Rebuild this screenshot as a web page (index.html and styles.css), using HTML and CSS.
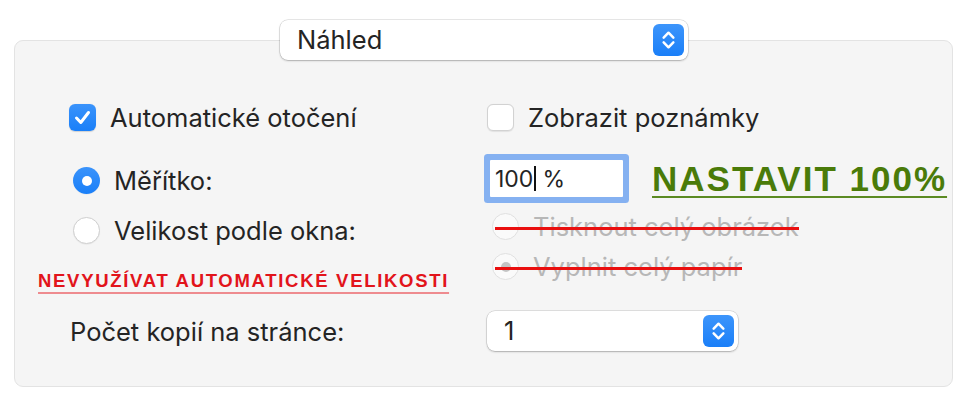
FILE: index.html
```html
<!DOCTYPE html>
<html lang="cs">
<head>
<meta charset="utf-8">
<title>Náhled</title>
<link rel="stylesheet" href="styles.css">
</head>
<body>
<div class="page">
  <div class="popup popup-top">
    <span class="popup-text">Náhled</span>
    <span class="stepper">
      <svg viewBox="0 0 32 32" width="31" height="32"><path d="M11 13.5 L16 8.5 L21 13.5 M11 18.5 L16 23.5 L21 18.5" fill="none" stroke="#fff" stroke-width="2.6" stroke-linecap="round" stroke-linejoin="round"/></svg>
    </span>
  </div>
  <div class="panel">
    <div class="cols">
      <div class="col col-left">
        <div class="check-row first">
          <span class="checkbox checked">
            <svg viewBox="0 0 27 27" width="27" height="27"><path d="M7.5 14 L11.8 18.5 L19.5 8.5" fill="none" stroke="#fff" stroke-width="3" stroke-linecap="round" stroke-linejoin="round"/></svg>
          </span>
          <span>Automatické otočení</span>
        </div>
        <div class="radio-row scale-row"><span class="radio on"></span><span>Měřítko:</span></div>
        <div class="radio-row fit-row"><span class="radio"></span><span>Velikost podle okna:</span></div>
        <div class="note note-red">NEVYUŽÍVAT AUTOMATICKÉ VELIKOSTI</div>
      </div>
      <div class="col col-right">
        <div class="check-row first">
          <span class="checkbox"></span>
          <span>Zobrazit poznámky</span>
        </div>
        <div class="field-row">
          <div class="field"><span>100</span><span class="caret"></span><span class="unit">%</span></div>
          <div class="note note-green">NASTAVIT 100%</div>
        </div>
        <div class="radio-row disabled struck whole-row"><span class="radio"></span><span>Tisknout celý obrázek</span></div>
        <div class="radio-row disabled struck fill-row"><span class="radio dot"></span><span>Vyplnit celý papír</span></div>
      </div>
    </div>
    <div class="copies-row">
      <span class="copies-label">Počet kopií na stránce:</span>
      <div class="popup popup-copies">
        <span class="popup-text">1</span>
        <span class="stepper">
          <svg viewBox="0 0 32 32" width="31" height="32"><path d="M11 13.5 L16 8.5 L21 13.5 M11 18.5 L16 23.5 L21 18.5" fill="none" stroke="#fff" stroke-width="2.6" stroke-linecap="round" stroke-linejoin="round"/></svg>
        </span>
      </div>
    </div>
  </div>
</div>
</body>
</html>
```
FILE: styles.css
```css
html, body {
  margin: 0;
  padding: 0;
  background: #ffffff;
}
body {
  font-family: "Inter", "Liberation Sans", sans-serif;
  color: #242424;
  font-size: 25.5px;
}
.page {
  width: 970px;
  height: 410px;
  padding-top: 20px;
  box-sizing: border-box;
  display: flex;
  flex-direction: column;
}
.popup {
  background: #ffffff;
  border-radius: 8px;
  box-shadow: 0 0 0 0.5px rgba(0,0,0,0.18), 0 1px 2px rgba(0,0,0,0.22);
  height: 40px;
  box-sizing: border-box;
  display: flex;
  align-items: center;
  justify-content: space-between;
  padding: 0 4px 0 17px;
  position: relative;
  z-index: 2;
}
.popup-top {
  width: 408px;
  margin-left: 280px;
}
.popup-text {
  line-height: 1;
}
.stepper {
  width: 31px;
  height: 32px;
  border-radius: 6px;
  background: linear-gradient(#3d95fb, #1a7ff8);
  display: flex;
}
.panel {
  margin: -20px 17px 0 14px;
  height: 347px;
  box-sizing: border-box;
  border: 1px solid #e3e3e3;
  border-radius: 9px;
  background: #f5f5f5;
}
.cols {
  display: grid;
  grid-template-columns: 472px 1fr;
  align-items: start;
}
.col {
  display: flex;
  flex-direction: column;
  align-items: flex-start;
}
.check-row, .radio-row {
  display: flex;
  align-items: center;
  height: 27px;
  gap: 14px;
  white-space: nowrap;
}
.check-row.first {
  margin-top: 63px;
}
.col-left .check-row {
  margin-left: 54px;
}
.checkbox {
  width: 27px;
  height: 27px;
  box-sizing: border-box;
  border-radius: 6px;
  background: #ffffff;
  border: 1px solid #d2d2d2;
  box-shadow: 0 0.5px 1px rgba(0,0,0,0.08);
  display: flex;
  flex-shrink: 0;
}
.checkbox.checked {
  border: none;
  background: linear-gradient(#3a93fb, #1a7ff8);
  box-shadow: 0 0.5px 1px rgba(0,0,0,0.15);
}
.radio {
  width: 27px;
  height: 27px;
  box-sizing: border-box;
  border-radius: 50%;
  background: #ffffff;
  border: 1px solid #d0d0d0;
  box-shadow: 0 0.5px 1px rgba(0,0,0,0.08);
  display: flex;
  align-items: center;
  justify-content: center;
  flex-shrink: 0;
}
.radio.on {
  border: none;
  background: linear-gradient(#3a93fb, #1a7ff8);
}
.radio.on::after {
  content: "";
  width: 10px;
  height: 10px;
  border-radius: 50%;
  background: #ffffff;
}
.scale-row {
  margin-left: 58px;
  margin-top: 36px;
}
.fit-row {
  margin-left: 58px;
  margin-top: 23px;
}
.note {
  font-family: "Liberation Sans", "Inter", sans-serif;
  font-weight: 700;
  white-space: nowrap;
  text-decoration: underline;
  text-decoration-thickness: 2px;
}
.note-red {
  margin-left: 23px;
  margin-top: 26px;
  font-size: 18.5px;
  line-height: 22px;
  letter-spacing: 1.7px;
  color: #e2141b;
  text-decoration-color: #ee8b8f;
  text-underline-offset: 5px;
}
.note-green {
  font-size: 35px;
  line-height: 36px;
  letter-spacing: 2px;
  color: #4a7b09;
  text-decoration-color: #5b8a22;
  text-underline-offset: 5px;
  margin-left: 29px;
}
.field-row {
  display: flex;
  align-items: center;
  margin-top: 29px;
  margin-left: 3px;
}
.field {
  width: 133px;
  height: 37px;
  box-sizing: border-box;
  background: #ffffff;
  border-radius: 1px;
  box-shadow: 0 0 0 6px #85b1f1;
  display: flex;
  align-items: center;
  padding-left: 5px;
  font-size: 23px;
}
.caret {
  width: 2px;
  height: 25px;
  background: #111111;
  margin: 0 6px 0 1px;
}
.radio-row.disabled {
  color: #b7b7b7;
  position: relative;
}
.radio-row.disabled .radio {
  background: #fafafa;
  border-color: #e0e0e0;
  box-shadow: none;
}
.radio.dot::after {
  content: "";
  width: 10px;
  height: 10px;
  border-radius: 50%;
  background: #c4c4c4;
}
.whole-row {
  margin-left: 5px;
  margin-top: 16px;
}
.fill-row {
  margin-left: 5px;
  margin-top: 13px;
}
.struck::after {
  content: "";
  position: absolute;
  left: 3px;
  right: 0;
  top: 14px;
  height: 3px;
  background: #ea0f0f;
}
.copies-row {
  display: flex;
  align-items: center;
  margin-top: 19px;
}
.copies-label {
  margin-left: 55px;
  width: 417px;
}
.popup-copies {
  width: 251px;
  padding-left: 17px;
}
```
